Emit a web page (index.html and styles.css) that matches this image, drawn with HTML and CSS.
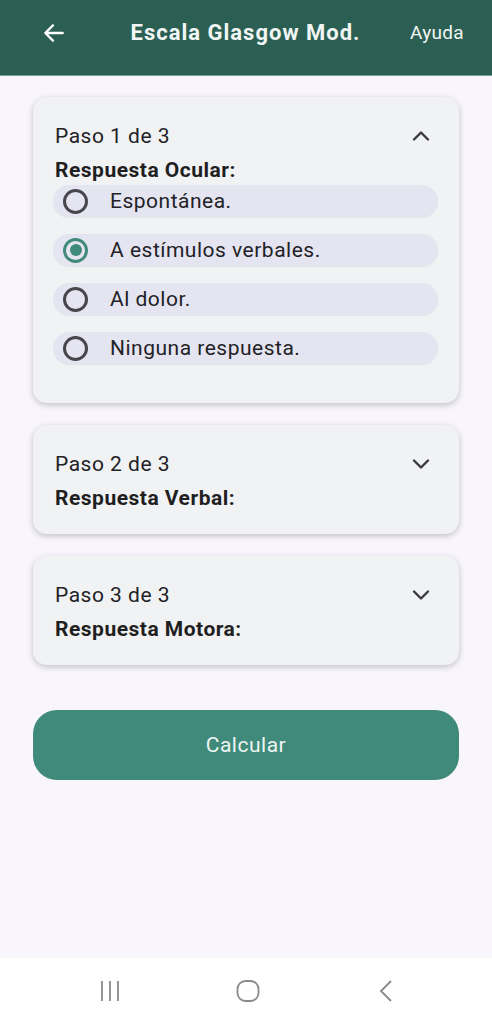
FILE: index.html
```html
<!DOCTYPE html>
<html lang="es">

<head>
    <meta charset="UTF-8">
    <meta name="viewport" content="width=device-width, initial-scale=1.0">
    <title>Escala Glasgow Mod.</title>
    <link rel="stylesheet" href="styles.css">
</head>

<body>

    <!-- Top Bar -->
    <div class="topbar">
        <svg class="back" width="26" height="26" viewBox="0 0 24 24">
            <path d="M20 12H4.5M11 5l-7 7 7 7" fill="none" stroke="#fff" stroke-width="2.2" stroke-linecap="round" stroke-linejoin="round" />
        </svg>
        <div class="title">Escala Glasgow Mod.</div>
        <div class="help">Ayuda</div>
    </div>

    <!-- Content -->
    <div class="content">

        <div class="card">
            <div class="card-head">
                <div>
                    <div class="step">Paso 1 de 3</div>
                    <div class="label">Respuesta Ocular:</div>
                </div>
                <svg class="chev" width="24" height="24" viewBox="0 0 24 24">
                    <path d="M5 15.5l7-7 7 7" fill="none" stroke="#3a3a3e" stroke-width="2.4" stroke-linecap="round" stroke-linejoin="round" />
                </svg>
            </div>
            <div class="options">
                <div class="option"><span class="radio"></span>Espontánea.</div>
                <div class="option"><span class="radio checked"></span>A estímulos verbales.</div>
                <div class="option"><span class="radio"></span>Al dolor.</div>
                <div class="option"><span class="radio"></span>Ninguna respuesta.</div>
            </div>
        </div>

        <div class="card">
            <div class="card-head">
                <div>
                    <div class="step">Paso 2 de 3</div>
                    <div class="label">Respuesta Verbal:</div>
                </div>
                <svg class="chev" width="24" height="24" viewBox="0 0 24 24">
                    <path d="M5 8.5l7 7 7-7" fill="none" stroke="#3a3a3e" stroke-width="2.4" stroke-linecap="round" stroke-linejoin="round" />
                </svg>
            </div>
        </div>

        <div class="card">
            <div class="card-head">
                <div>
                    <div class="step">Paso 3 de 3</div>
                    <div class="label">Respuesta Motora:</div>
                </div>
                <svg class="chev" width="24" height="24" viewBox="0 0 24 24">
                    <path d="M5 8.5l7 7 7-7" fill="none" stroke="#3a3a3e" stroke-width="2.4" stroke-linecap="round" stroke-linejoin="round" />
                </svg>
            </div>
        </div>

        <button class="calc">Calcular</button>
    </div>

    <!-- System Navigation -->
    <div class="sysnav">
        <svg width="26" height="26" viewBox="0 0 26 26">
            <path d="M5 3v20M13 3v20M21 3v20" stroke="#8a8a8a" stroke-width="1.8" />
        </svg>
        <svg width="26" height="26" viewBox="0 0 26 26">
            <rect x="2.5" y="3" width="21" height="20" rx="8" fill="none" stroke="#8a8a8a" stroke-width="1.8" />
        </svg>
        <svg width="26" height="26" viewBox="0 0 26 26">
            <path d="M19 3L9 13l10 10" fill="none" stroke="#8a8a8a" stroke-width="1.8" />
        </svg>
    </div>

</body>

</html>
```

FILE: styles.css
```css
body {
    margin: 0;
    font-family: Roboto, "Liberation Sans", sans-serif;
    background-color: #f8f6fc;
    height: 1024px;
    display: flex;
    flex-direction: column;
    color: #1d1b20;
}

/* Top Bar */
.topbar {
    height: 76px;
    background-color: #2b5f53;
    border-bottom: 1px solid #6fa496;
    display: flex;
    align-items: center;
    padding: 0 28px 10px 41px;
    box-sizing: border-box;
    color: #f1f6f4;
}

.back {
    flex: none;
}

.title {
    flex: 1;
    text-align: center;
    font-size: 22px;
    font-weight: bold;
    letter-spacing: 1px;
    margin-left: 30px;
    margin-right: 16px;
    white-space: nowrap;
}

.help {
    font-size: 19px;
    letter-spacing: 0.3px;
}

/* Content */
.content {
    flex: 1;
    padding: 21px 33px 0 33px;
    display: flex;
    flex-direction: column;
    gap: 22px;
}

.card {
    background-color: #f1f2f4;
    border-radius: 14px;
    box-shadow: 0 2px 6px rgba(0, 0, 0, 0.22);
    padding: 27px 26px 24px 22px;
}

.card-head {
    display: flex;
    justify-content: space-between;
    align-items: flex-start;
}

.step {
    font-size: 21px;
    line-height: 24px;
    letter-spacing: 0.5px;
    color: #222226;
}

.label {
    font-size: 21px;
    font-weight: bold;
    line-height: 24px;
    letter-spacing: 0.5px;
    margin-top: 10px;
    color: #1f1f22;
}

/* Options */
.options {
    display: flex;
    flex-direction: column;
    gap: 17px;
    margin: 3px -5px 15px -2px;
}

.option {
    height: 32px;
    border-radius: 16px;
    background-color: #e5e5f1;
    box-shadow: 0 1px 1px rgba(0, 0, 0, 0.06);
    display: flex;
    align-items: center;
    font-size: 21px;
    letter-spacing: 0.5px;
    color: #222226;
    padding-left: 10px;
}

.radio {
    width: 25px;
    height: 25px;
    border: 3px solid #46464c;
    border-radius: 50%;
    box-sizing: border-box;
    margin-right: 22px;
    position: relative;
}

.radio.checked {
    border-color: #3f8a7a;
}

.radio.checked::after {
    content: "";
    position: absolute;
    left: 3.5px;
    top: 3.5px;
    width: 12px;
    height: 12px;
    border-radius: 50%;
    background-color: #3f8a7a;
}

/* Button */
.calc {
    margin-top: 23px;
    height: 70px;
    border: none;
    border-radius: 24px;
    background-color: #3f8a7a;
    color: #eef5f2;
    font-family: Roboto, "Liberation Sans", sans-serif;
    font-size: 21px;
    letter-spacing: 0.5px;
}

/* System navigation */
.sysnav {
    height: 66px;
    background-color: #ffffff;
    display: flex;
    justify-content: space-between;
    align-items: center;
    padding: 0 94px 0 97px;
}
```
